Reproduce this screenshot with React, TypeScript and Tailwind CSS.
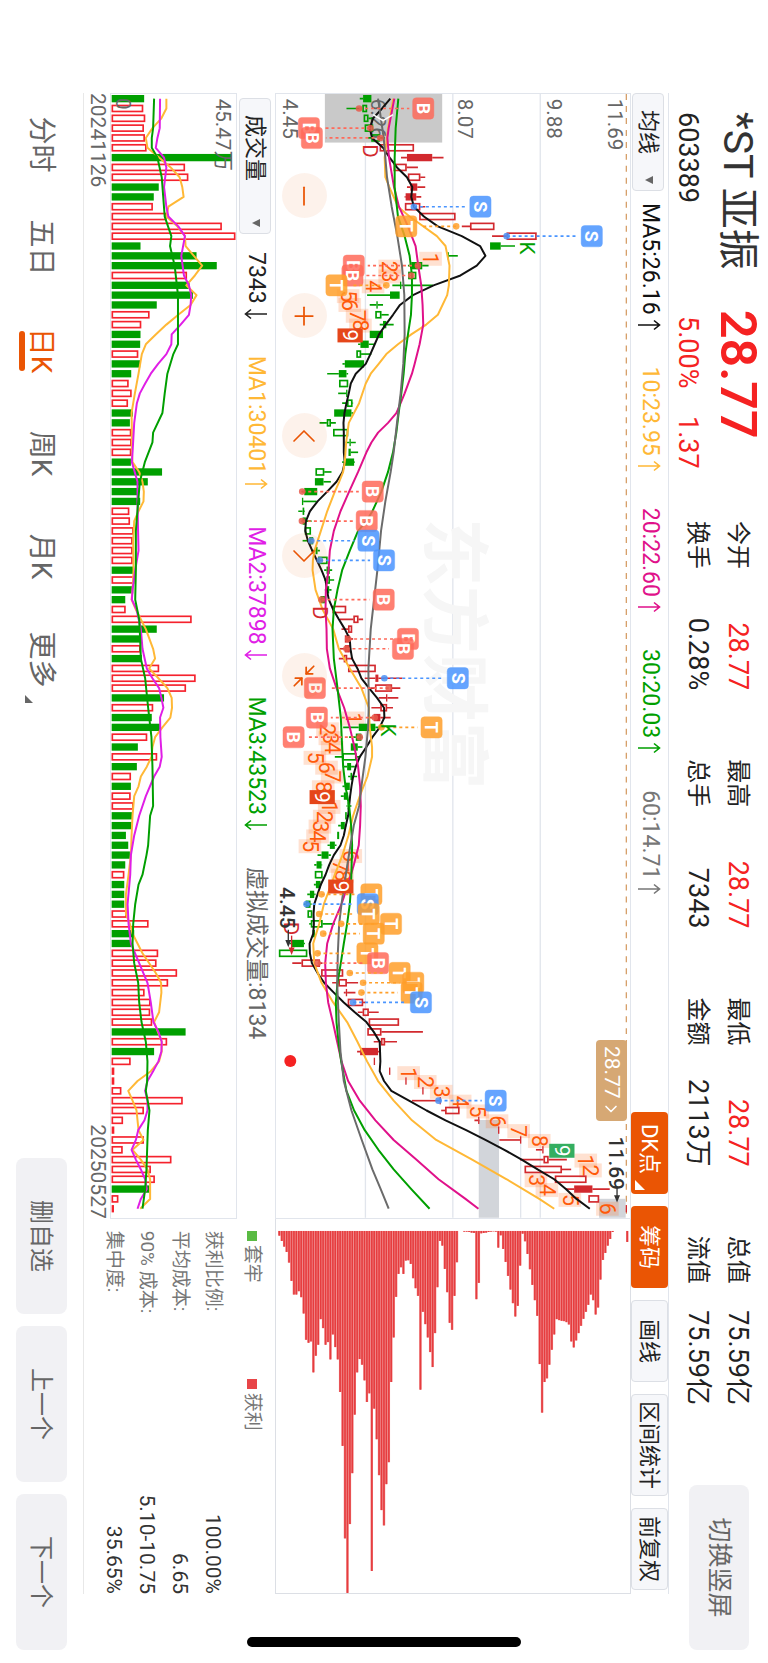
import type { ReactNode } from "react";
import { ChevronLeft, ChevronRight, Minimize2, Minus, Plus } from "lucide-react";

// Chart drawings use three units per pixel, 114 trading days per view
const STEP = 29.53;
const dayX = (i: number) => 14 + STEP * i;
const TOP = 1083;
const priceY = (level: number) => TOP - level;
const volumeY = (level: number) => 472 - level;

const UP = "#d2292e";
const DOWN = "#009f00";

type Kind = "g" | "G" | "r" | "R";
// kind (capital G / small r are hollow), body low, body high, low, high
type Candle = [Kind, number, number, number?, number?];

const candles: Candle[] = [
  ["g", 280, 305, 270, 305], ["G", 278, 292, 230, 292], ["G", 282, 296, 282, 312], ["G", 285, 310], ["G", 305, 330, 295, 345],
  ["r", 330, 433], ["R", 412, 488, 394, 522], ["r", 372, 411, 372, 445], ["r", 415, 452, 415, 467], ["R", 422, 443, 412, 467],
  ["R", 408, 440, 405, 455], ["r", 406, 452, 406, 467], ["r", 449, 558], ["r", 602, 675, 577, 675], ["r", 712, 802, 668, 802],
  ["g", 662, 694, 662, 737], ["g", 534, 538, 534, 565], ["g", 425, 458, 415, 477], ["G", 416, 440], ["g", 391, 395, 368, 490],
  ["g", 361, 390, 292, 390], ["g", 320, 324, 300, 340], ["G", 317, 335, 317, 357], ["g", 340, 350, 330, 372], ["g", 300, 340],
  ["g", 272, 297, 265, 315], ["G", 260, 274, 260, 305], ["g", 225, 283, 218, 283], ["g", 207, 230, 172, 235], ["G", 208, 235],
  ["g", 229, 233, 205, 233], ["G", 232, 248, 217, 250], ["g", 193, 245, 193, 250], ["G", 171, 183, 149, 198], ["G", 190, 235],
  ["g", 239, 243, 227, 258], ["g", 236, 243, 236, 265], ["g", 222, 253, 217, 255], ["G", 137, 163, 137, 185], ["g", 135, 161, 135, 183],
  ["g", 103, 142, 95, 142], ["g", 96, 100, 96, 140], ["g", 98, 103, 85, 105], ["g", 98, 108, 95, 125], ["G", 105, 123],
  ["g", 118, 130, 98, 130], ["g", 137, 143, 125, 150], ["G", 145, 173], ["g", 170, 180, 163, 187], ["G", 170, 180, 163, 193],
  ["g", 172, 178, 165, 185], ["g", 152, 165, 145, 165], ["r", 188, 229], ["r", 251, 266, 210, 280], ["r", 235, 247, 215, 247],
  ["R", 225, 240, 225, 250], ["R", 225, 240, 210, 240], ["r", 222, 232, 207, 250], ["r", 235, 318], ["R", 317, 326, 285, 398],
  ["r", 316, 367, 302, 392], ["R", 349, 353, 327, 386], ["r", 332, 352, 305, 370], ["R", 312, 332, 300, 363], ["g", 267, 317, 220, 330],
  ["g", 258, 275, 238, 278], ["g", 243, 264, 243, 278], ["G", 218, 260, 195, 272], ["g", 232, 244, 222, 255], ["g", 242, 247, 235, 262],
  ["g", 225, 240, 218, 240], ["g", 222, 235, 213, 235], ["g", 233, 240, 230, 245], ["g", 226, 231], ["g", 213, 225, 205, 230],
  ["g", 202, 208], ["g", 180, 195, 173, 200], ["g", 155, 176, 143, 183], ["g", 140, 155, 133, 157], ["G", 135, 158],
  ["g", 138, 152, 132, 155], ["g", 120, 133, 112, 137], ["g", 107, 122, 102, 125], ["G", 113, 127], ["G", 123, 158, 118, 195],
  ["g", 128, 135], ["g", 65, 102, 60, 105], ["G", 27, 112], ["r", 95, 150, 67, 158], ["r", 154, 220],
  ["r", 206, 231, 187, 265], ["R", 228, 232, 222, 257], ["r", 234, 280, 234, 287], ["r", 279, 297, 264, 327], ["r", 297, 388],
  ["r", 293, 335, 293, 460], ["r", 334, 346, 312, 382], ["R", 271, 325, 262, 330], ["R", 312, 316], ["R", 358, 362],
  ["R", 407, 411], ["R", 458, 462], ["R", 510, 514, 427, 514], ["r", 527, 570, 515, 570], ["R", 626, 630, 615, 629],
  ["R", 686, 690], ["R", 752, 756, 690, 756], ["R", 819, 823, 800, 823], ["r", 823, 838, 752, 893], ["r", 766, 878, 766, 906],
  ["r", 857, 952], ["R", 915, 970, 890, 1022], ["r", 958, 990], ["R", 1070, 1074],
];

type Point = [number, number];

const ma5: Point[] = [
  362, 337, 310, 300, 307, 340, 360, 382, 412, 428, 425, 433, 463, 505, 577, 632, 648, 622, 573, 492, 430, 391, 370, 348, 328, 315, 302,
  288, 258, 243, 237, 230, 224, 221, 222, 222, 222, 225, 218, 200, 172, 143, 120, 108, 106, 114, 127, 141, 155, 167, 171, 177, 190, 207,
  225, 240, 242, 247, 263, 275, 298, 322, 343, 344, 330, 308, 290, 270, 258, 250, 245, 241, 238, 235, 228, 222, 212, 192, 178, 167, 153,
  143, 133, 131, 132, 130, 119, 120, 126, 143, 163, 192, 222, 255, 290, 312, 330, 331, 332, 330, 343, 365, 418, 471, 528, 590, 648, 705,
  757, 805, 855, 890, 922, 962,
].map((v, i) => [i, v]);

const ma10: Point[] = [
  [0, 371], [3, 355], [6, 345], [8, 347], [9, 359], [11, 385], [12, 420], [14, 502], [15, 528], [17, 540], [19, 538], [20, 533],
  [22, 505], [23, 470], [24, 425], [25, 385], [26, 350], [27, 327], [28, 303], [29, 288], [31, 268], [33, 237], [35, 229], [37, 225],
  [38, 220], [39, 208], [40, 195], [42, 172], [44, 153], [46, 134], [47, 129], [48, 128], [50, 137], [52, 158], [54, 190], [56, 207],
  [58, 240], [60, 275], [62, 297], [64, 300], [66, 307], [67, 307], [69, 293], [71, 270], [73, 250], [75, 236], [77, 218], [79, 195],
  [81, 173], [82, 162], [84, 148], [86, 130], [88, 133], [90, 155], [92, 190], [94, 232], [96, 263], [98, 292], [100, 325], [102, 372],
  [104, 427], [106, 500], [108, 608], [110, 712], [112, 810], [113, 855],
];

const ma20: Point[] = [
  [0, 374], [3, 357], [4, 353], [6, 358], [9, 373], [11, 388], [13, 415], [15, 438], [17, 446], [19, 455], [21, 459], [23, 461],
  [25, 450], [27, 435], [28, 427], [30, 405], [31, 393], [32, 380], [33, 355], [34, 325], [35, 305], [36, 290], [38, 265], [40, 238],
  [42, 212], [44, 192], [46, 180], [48, 176], [50, 168], [52, 167], [54, 170], [56, 171], [58, 180], [60, 200], [62, 223], [64, 240],
  [66, 254], [68, 265], [70, 271], [72, 273], [74, 271], [76, 267], [78, 252], [80, 235], [82, 215], [84, 190], [86, 172], [88, 166],
  [90, 168], [92, 175], [94, 189], [96, 202], [98, 215], [100, 235], [102, 270], [104, 317], [106, 372], [108, 440], [110, 507],
  [112, 588], [113, 627],
];

const ma30: Point[] = [
  [0, 386], [3, 378], [6, 375], [9, 375], [12, 385], [14, 405], [16, 420], [18, 427], [20, 427], [22, 424], [24, 415], [26, 407],
  [28, 402], [30, 395], [32, 387], [34, 380], [36, 370], [38, 355], [40, 335], [42, 308], [43, 290], [44, 265], [46, 240], [48, 217],
  [50, 203], [52, 192], [54, 188], [57, 192], [60, 203], [63, 213], [66, 217], [68, 220], [70, 227], [72, 238], [74, 244], [76, 247],
  [80, 244], [82, 240], [84, 232], [86, 222], [88, 213], [90, 203], [92, 198], [94, 200], [96, 206], [98, 214], [101, 230], [103, 253],
  [105, 285], [107, 326], [109, 372], [111, 425], [113, 480],
];

const ma60: Point[] = [
  [0, 325], [4, 342], [8, 352], [11, 366], [14, 383], [17, 397], [20, 404], [24, 405], [27, 401], [30, 393], [33, 382], [36, 372],
  [38, 363], [41, 347], [44, 334], [48, 323], [51, 313], [54, 303], [58, 296], [62, 297], [64, 295], [67, 287], [70, 275], [72, 268],
  [74, 252], [76, 242], [79, 228], [82, 215], [84, 208], [87, 204], [90, 202], [94, 207], [97, 212], [100, 222], [103, 245], [106, 276],
  [109, 308], [111, 333], [113, 357],
];

// letter, day, badge level, dot level
const signals: ["B" | "S" | "T", number, number, number][] = [
  ["B", 1, 461, 268], ["B", 3, 117, 302], ["B", 4, 126, 332], ["S", 11, 633, 433], ["T", 13, 410, 560], ["S", 14, 968, 712],
  ["B", 17, 252, 445], ["B", 18, 248, 425], ["T", 19, 200, 350], ["B", 40, 309, 97], ["B", 43, 291, 96], ["S", 45, 296, 124],
  ["S", 47, 343, 150], ["B", 51, 342, 155], ["B", 55, 415, 235], ["B", 56, 400, 230], ["S", 59, 565, 344], ["B", 60, 135, 357],
  ["B", 63, 141, 315], ["T", 64, 486, 335], ["B", 65, 71, 270], ["T", 81, 305, 155], ["S", 82, 294, 110], ["T", 83, 297, 148],
  ["T", 84, 364, 214], ["T", 85, 312, 160], ["T", 87, 293, 143], ["B", 88, 325, 143], ["T", 89, 390, 240], ["T", 90, 431, 280],
  ["T", 91, 426, 275], ["S", 92, 454, 250], ["S", 102, 679, 507],
];
const signalColor = { B: "#ff6a5a", S: "#4a95ff", T: "#ff9f2a" };
const dotColor = { B: "#e8594b", S: "#4a8ff5", T: "#ffa02c" };

// nine-turn counts: digit, day, level
const counts: [string, number, number][] = [
  ["1", 16.3, 483], ["2", 17.1, 360], ["3", 18.1, 360], ["4", 19.1, 310], ["5", 20.1, 235], ["6", 21, 240], ["7", 22.1, 262],
  ["8", 23.1, 272], ["1", 63.1, 250], ["2", 64.2, 173], ["3", 65.1, 180], ["4", 66.1, 187], ["5", 67.1, 135], ["6", 68.1, 170],
  ["7", 69, 187], ["8", 70.1, 160], ["1", 72.1, 178], ["2", 73.1, 163], ["3", 74.1, 150], ["4", 75.1, 143], ["5", 76.1, 120],
  ["6", 77.1, 243], ["7", 78.1, 212], ["8", 79.1, 218], ["1", 99.2, 417], ["2", 100.1, 467], ["3", 101.1, 515], ["4", 102.1, 572],
  ["5", 103.1, 625], ["6", 104.1, 683], ["7", 105.1, 748], ["8", 106.1, 810], ["1", 108.1, 950], ["2", 109.1, 964], ["3", 110.1, 800],
  ["4", 111.1, 833], ["5", 112.1, 902], ["6", 113, 1015],
];
const nines: [number, number, string][] = [
  [24.1, 241, "#e5461a"], [71.1, 157, "#e5461a"], [80.2, 213, "#e5461a"], [107.1, 878, "#34ae60"],
];

const volumes: [Kind, number][] = [
  ["g", 195], ["r", 192], ["r", 198], ["r", 194], ["r", 197], ["r", 202], ["g", 458], ["r", 318], ["r", 328], ["g", 239], ["g", 224],
  ["r", 221], ["r", 262], ["r", 429], ["r", 470], ["g", 184], ["g", 353], ["g", 414], ["r", 324], ["g", 332], ["g", 342], ["g", 233],
  ["r", 211], ["r", 186], ["g", 184], ["g", 183], ["r", 177], ["g", 183], ["g", 156], ["r", 148], ["r", 157], ["r", 146], ["g", 161],
  ["g", 152], ["r", 156], ["r", 157], ["r", 156], ["g", 155], ["g", 249], ["g", 206], ["g", 178], ["g", 183], ["r", 150], ["r", 152],
  ["r", 163], ["r", 160], ["r", 160], ["r", 160], ["g", 163], ["r", 165], ["g", 162], ["g", 138], ["r", 139], ["r", 338], ["g", 233],
  ["g", 183], ["r", 184], ["g", 188], ["r", 240], ["r", 350], ["r", 321], ["g", 255], ["r", 222], ["g", 218], ["g", 243], ["r", 204],
  ["g", 176], ["r", 234], ["g", 173], ["r", 155], ["g", 155], ["r", 154], ["r", 163], ["g", 158], ["g", 157], ["g", 140], ["g", 147],
  ["g", 152], ["g", 138], ["r", 135], ["g", 135], ["g", 135], ["g", 135], ["r", 142], ["r", 208], ["g", 165], ["g", 155], ["r", 237],
  ["r", 232], ["r", 294], ["r", 267], ["r", 196], ["r", 214], ["r", 213], ["r", 219], ["g", 320], ["r", 264], ["g", 225], ["r", 154],
  ["R", 105], ["R", 105], ["r", 126], ["r", 311], ["r", 194], ["r", 131], ["R", 105], ["r", 194], ["r", 130], ["r", 277], ["r", 215],
  ["r", 227], ["g", 211], ["r", 117], ["R", 104],
];

const volumeMa1: Point[] = [
  [0, 262], [1, 262], [2, 247], [3, 220], [4, 200], [5, 205], [6, 240], [7, 275], [8, 302], [9, 310], [10, 314], [11, 268], [12, 262],
  [13, 295], [14, 318], [15, 320], [16, 345], [17, 370], [18, 348], [19, 322], [20, 353], [21, 335], [22, 298], [23, 262], [24, 230],
  [25, 200], [26, 188], [28, 178], [30, 167], [32, 157], [34, 158], [36, 158], [37, 160], [38, 180], [39, 190], [40, 194], [41, 193],
  [42, 178], [43, 165], [45, 162], [48, 163], [50, 160], [51, 157], [52, 170], [54, 200], [56, 222], [57, 228], [58, 210], [59, 238],
  [60, 265], [61, 278], [62, 279], [63, 274], [64, 250], [65, 228], [66, 220], [67, 217], [68, 203], [69, 185], [70, 178], [71, 165],
  [73, 160], [75, 157], [77, 155], [79, 148], [81, 140], [83, 140], [84, 152], [85, 160], [87, 190], [89, 230], [90, 246], [91, 247],
  [93, 240], [94, 225], [96, 248], [97, 248], [98, 240], [99, 215], [100, 175], [101, 147], [102, 160], [103, 172], [105, 178],
  [106, 193], [107, 160], [108, 185], [109, 205], [110, 213], [112, 213], [113, 183],
];
const volumeMa2: Point[] = [
  [0, 243], [3, 242], [4, 235], [5, 230], [6, 255], [7, 262], [9, 255], [11, 262], [12, 268], [13, 298], [14, 318], [16, 307], [18, 315],
  [19, 330], [20, 337], [21, 335], [22, 330], [23, 305], [24, 278], [25, 277], [26, 262], [27, 237], [28, 215], [29, 198], [30, 182],
  [31, 173], [33, 165], [36, 160], [37, 158], [39, 175], [41, 175], [43, 176], [46, 178], [48, 168], [50, 160], [51, 158], [52, 172],
  [54, 185], [56, 190], [58, 203], [59, 220], [60, 240], [61, 247], [62, 253], [63, 243], [65, 244], [67, 248], [68, 242], [69, 225],
  [71, 200], [73, 180], [75, 165], [77, 155], [79, 153], [82, 145], [84, 148], [86, 155], [88, 180], [90, 205], [92, 215], [94, 223],
  [95, 238], [96, 248], [97, 247], [98, 238], [99, 222], [100, 205], [101, 198], [102, 205], [103, 205], [104, 196], [105, 177],
  [106, 170], [107, 157], [108, 170], [109, 185], [110, 198], [111, 203], [112, 185], [113, 175],
];
const volumeMa3: Point[] = [
  [0, 225], [3, 222], [4, 218], [5, 218], [6, 235], [8, 248], [12, 257], [14, 277], [15, 273], [17, 287], [20, 297], [25, 297],
  [26, 283], [28, 265], [30, 257], [32, 250], [34, 222], [35, 220], [37, 197], [39, 182], [41, 177], [44, 170], [48, 170], [51, 168],
  [53, 180], [55, 183], [57, 185], [59, 198], [62, 207], [65, 217], [68, 220], [72, 222], [73, 213], [76, 207], [77, 202], [79, 190],
  [80, 178], [82, 168], [84, 162], [86, 160], [88, 165], [90, 177], [92, 180], [94, 187], [96, 200], [98, 205], [100, 204], [101, 200],
  [103, 211], [105, 206], [107, 204], [109, 202], [111, 198], [113, 190],
];

// Chip distribution, lowest price first
const chips = [
  137, 153, 170, 186, 218, 273, 314, 314, 304, 322, 371, 450, 459, 455, 548, 498, 465, 388, 415, 465, 457, 509, 434, 472, 509, 607, 769,
  1047, 1211, 1004, 851, 675, 548, 508, 525, 572, 637, 611, 1145, 657, 749, 857, 962, 1008, 884, 818, 577, 443, 321, 252, 232, 252, 212,
  211, 222, 265, 295, 318, 600, 366, 403, 443, 487, 532, 430, 292, 153, 167, 237, 307, 399, 420, 318, 217, 0, 0, 125, 125, 126, 128, 129,
  328, 279, 130, 129, 128, 126, 125, 124, 125, 173, 136, 177, 216, 258, 299, 340, 380, 348, 227, 131, 154, 192, 238, 285, 331, 378, 523,
  669, 577, 566, 525, 480, 434, 388, 391, 393, 394, 397, 404, 455, 473, 452, 430, 408, 387, 366, 345, 314, 331, 374, 353, 269, 210, 189,
  167, 147, 126, 0, 0, 0, 0, 0, 156,
];

const quotes = [
  [["今开", "28.77", "text-[#f52222]"], ["换手", "0.28%", "text-[#222222]"]],
  [["最高", "28.77", "text-[#f52222]"], ["总手", "7343", "text-[#222222]"]],
  [["最低", "28.77", "text-[#f52222]"], ["金额", "2113万", "text-[#222222]"]],
  [["总值", "75.59亿", "text-[#222222]"], ["流值", "75.59亿", "text-[#222222]"]],
];

const costs = [
  ["获利比例:", "100.00%"],
  ["平均成本:", "6.65"],
  ["90% 成本:", "5.10-10.75"],
  ["集中度:", "35.65%"],
];

function linePath(points: Point[], toY: (level: number) => number) {
  return points.map(([i, v], n) => `${n ? "L" : "M"}${dayX(i).toFixed(1)} ${toY(v)}`).join("");
}

function Arrow({ down = false }: { down?: boolean }) {
  return (
    <svg
      viewBox="0 0 12 24"
      className={down ? "h-6 w-3 rotate-180" : "h-6 w-3"}
      fill="none"
      stroke="currentColor"
      strokeWidth="1.6"
      aria-hidden="true"
    >
      <path d="M6 23V2M1.500 7 6 1.500 10.500 7" />
    </svg>
  );
}

function Indicator({ color, down, children }: { color: string; down?: boolean; children: ReactNode }) {
  return (
    <span className={`flex items-center gap-1 whitespace-nowrap ${color}`}>
      {children}
      <Arrow down={down} />
    </span>
  );
}

function Picker({ label, option, width }: { label: string; option: string; width: string }) {
  return (
    <div className={`relative h-8 shrink-0 ${width}`}>
      <select
        aria-label={label}
        className="h-full w-full appearance-none rounded-[4px] border border-[#dcdfe5] bg-[#f6f7fa] pl-4 text-[22px] leading-7 text-[#222222]"
      >
        <option>{option}</option>
      </select>
      <svg viewBox="0 0 10 8" className="pointer-events-none absolute right-1.5 top-3 h-2 w-2.5" aria-hidden="true">
        <path d="M1 0h8L5 8z" fill="#666" />
      </svg>
    </div>
  );
}

function CandleStick({ candle, index }: { candle: Candle; index: number }) {
  const [kind, bodyLow, bodyHigh, low = bodyLow, high = bodyHigh] = candle;
  const x = dayX(index);
  const color = kind === "g" || kind === "G" ? DOWN : UP;
  const hollow = kind === "G" || kind === "r";
  const inset = hollow ? 2 : 0;
  return (
    <g stroke={color} strokeWidth={hollow ? 5 : 0}>
      <path d={`M${x} ${priceY(high)}V${priceY(bodyHigh)}M${x} ${priceY(bodyLow)}V${priceY(low)}`} strokeWidth="5" />
      <rect
        x={x - 11 + inset}
        y={priceY(bodyHigh) + inset}
        width={22 - inset * 2}
        height={Math.max(bodyHigh - bodyLow - inset * 2, 2)}
        fill={hollow ? "none" : color}
      />
    </g>
  );
}

function Signal({ signal }: { signal: (typeof signals)[number] }) {
  const [letter, day, level, dot] = signal;
  const x = dayX(day);
  const edge = level > dot ? level - 42 : level + 42;
  return (
    <g>
      <path d={`M${x} ${priceY(dot)}V${priceY(edge)}`} stroke={signalColor[letter]} strokeWidth="5" strokeDasharray="9 9" />
      <circle cx={x} cy={priceY(dot)} r="10" fill={dotColor[letter]} opacity="0.85" />
      <rect
        x={x - 32}
        y={priceY(level) - 32}
        width="64"
        height="64"
        rx="11"
        fill={signalColor[letter]}
        stroke={signalColor[letter]}
        strokeOpacity="0.4"
        strokeWidth="3"
        opacity="0.85"
      />
      <text x={x} y={priceY(level) + 19} textAnchor="middle" fontSize="54" fontWeight="700" fill="#fff">
        {letter}
      </text>
    </g>
  );
}

function PriceChart() {
  return (
    <svg
      viewBox="0 0 3378 1065"
      preserveAspectRatio="none"
      className="absolute inset-0 h-full w-full"
      role="img"
      aria-label="日K线"
    >
      <g stroke="#e1e5ec" strokeWidth="4">
        <path d={`M0 ${priceY(813)}H3378M0 ${priceY(550)}H3378M0 ${priceY(287)}H3378`} />
        <path d={`M3130 ${priceY(754)}H3378`} />
      </g>
      <text x="1275" y={priceY(480)} fontSize="204" fontWeight="700" fill="#f6f6f6">
        东方财富
      </text>
      <path d={`M0 ${priceY(1072)}H3378`} stroke="#d6a06a" strokeWidth="4" strokeDasharray="18 18" />
      <rect x="0" y={priceY(518)} width="146" height="353" fill="#c9c9c9" />
      <rect x="3084" y={priceY(689)} width="294" height="61" fill="#d2d5da" />
      <rect x="3321" y={priceY(1070)} width="57" height="80" fill="#d2d5da" />

      <g fontSize="62" fill="#666">
        <text x="14" y={priceY(1016)}>11.69</text>
        <text x="14" y={priceY(834)}>9.88</text>
        <text x="14" y={priceY(567)}>8.07</text>
        <text x="14" y={priceY(303)}>6.26</text>
        <text x="14" y={priceY(39)}>4.45</text>
      </g>

      {counts.map(([digit, day, level]) => (
        <g key={`${digit}-${day}`}>
          <rect x={dayX(day) - 21} y={priceY(level) - 34} width="42" height="68" fill="#ff6a1a" opacity="0.2" />
          <text x={dayX(day)} y={priceY(level) + 22} textAnchor="middle" fontSize="64" fill="#ff5a0a">
            {digit}
          </text>
        </g>
      ))}

      {candles.map((candle, i) => (
        <CandleStick key={i} candle={candle} index={i} />
      ))}

      <g fill="none" strokeWidth="6" strokeLinejoin="round">
        <path d={linePath(ma5, priceY)} stroke="#111" />
        <path d={linePath(ma10, priceY)} stroke="#ffb836" />
        <path d={linePath(ma20, priceY)} stroke="#e0118a" />
        <path d={linePath(ma30, priceY)} stroke={DOWN} />
        <path d={linePath(ma60, priceY)} stroke="#6b6b6b" />
      </g>

      <path d={`M62 ${priceY(370)}L80 ${priceY(340)}L62 ${priceY(310)}`} fill="none" stroke="#fff" strokeWidth="5" />

      {signals.map((signal) => (
        <Signal key={`${signal[0]}-${signal[1]}`} signal={signal} />
      ))}

      {nines.map(([day, level, color]) => (
        <g key={day}>
          <rect x={dayX(day) - 21} y={priceY(level) - 38} width="42" height="76" fill={color} />
          <text x={dayX(day)} y={priceY(level) + 22} textAnchor="middle" fontSize="62" fill="#fff">
            9
          </text>
        </g>
      ))}

      <g fontSize="62" textAnchor="middle">
        <text x={dayX(15) + 6} y={priceY(753)} fill={DOWN}>K</text>
        <text x={dayX(64) + 8} y={priceY(335)} fill={DOWN}>K</text>
        <text x={dayX(5) + 10} y={priceY(279)} fill={UP}>D</text>
        <text x={dayX(52) + 10} y={priceY(129)} fill={UP}>D</text>
        <text x={dayX(84) + 14} y={priceY(42)} fill={UP}>D</text>
      </g>

      <g fontSize="63" fontWeight="500" fill="#333">
        <text x="2384" y={priceY(31)}>4.45</text>
        <text x="3134" y={priceY(1021)}>11.69</text>
      </g>
      <path d={`M2512 ${priceY(55)}H2548M3284 ${priceY(1044)}H3316`} stroke="#333" strokeWidth="4" />
      <path d={`M2543 ${priceY(64)}l22 9l-22 9zM3310 ${priceY(1053)}l22 9l-22 9z`} fill="#333" />
      <path d={`M2530 ${priceY(65)}H2575`} stroke={UP} strokeWidth="4" />
      <path d={`M2566 ${priceY(74)}l22 9l-22 9z`} fill={UP} />
      <circle cx="2907" cy={priceY(61)} r="18" fill="#f52222" />
    </svg>
  );
}

function VolumeChart() {
  return (
    <svg viewBox="0 0 3378 377" preserveAspectRatio="none" className="h-full w-full" role="img" aria-label="成交量">
      {volumes.map(([kind, level], i) => {
        const hollow = kind === "r";
        const inset = hollow ? 2 : 0;
        return (
          <rect
            key={i}
            x={dayX(i) - 11 + inset}
            y={volumeY(level) + inset}
            width={22 - inset * 2}
            height={level - 97 - inset * 2}
            fill={hollow ? "none" : kind === "g" ? DOWN : "#f5222d"}
            stroke={hollow ? "#f5222d" : "none"}
            strokeWidth="5"
          />
        );
      })}
      <g fontSize="62" fill="#666">
        <text x="14" y={volumeY(411)}>45.47万</text>
        <text x="12" y={volumeY(110)}>0</text>
      </g>
      <g fill="none" strokeWidth="6" strokeLinejoin="round">
        <path d={linePath(volumeMa1, volumeY)} stroke="#ffb836" />
        <path d={linePath(volumeMa2, volumeY)} stroke="#e01ee6" />
        <path d={linePath(volumeMa3, volumeY)} stroke={DOWN} />
      </g>
    </svg>
  );
}

function ChipChart() {
  return (
    <svg viewBox="0 0 1125 1065" preserveAspectRatio="none" className="h-full w-full" role="img" aria-label="筹码分布">
      {chips.map((end, k) =>
        end ? (
          <g key={k} fill="#e63c3e">
            <rect x="36" y={1055 - 7.32 * k - 3.66} width={end - 123} height="7.32" opacity="0.7" />
            <rect x="36" y={1055 - 7.32 * k - 2.2} width={end - 123} height="4.4" />
          </g>
        ) : null,
      )}
    </svg>
  );
}

const roundButton = "flex size-[45px] items-center justify-center rounded-full bg-[#ea5504]/8 text-[#ea5504]";
const toolButton =
  "h-full rounded-[4px] border border-[#dcdfe5] bg-[#f6f7fa] text-[22px] whitespace-nowrap text-[#222222]";
const activeTool = "relative h-full rounded-[4px] bg-[#ea5504] text-[22px] whitespace-nowrap text-white";
const bottomButton = "h-[51px] w-[156px] rounded-lg bg-[#f1f1f4] text-2xl text-[#666666]";
const tabButton = "relative h-10 w-[103px] text-[28px] leading-10 whitespace-nowrap text-[#666666]";

export default function App() {
  return (
    <div className="h-screen w-screen overflow-hidden bg-white">
      {/* Landscape page, turned a quarter clockwise */}
      <main className="relative ml-[100vw] flex h-[100vw] w-[100vh] origin-top-left rotate-90 flex-col bg-white font-['Roboto','Noto_Sans_CJK_SC',sans-serif] text-[#222222]">
        <header className="flex h-[99px] shrink-0 items-start pl-28 pr-[13px]">
          <div className="w-[409px] shrink-0">
            <div className="flex h-[60px] items-center">
              <h1 className="w-[198px] text-[41px] leading-[60px] whitespace-nowrap text-[#333333]">*ST 亚振</h1>
              <span className="text-[50px] leading-[60px] font-semibold text-[#f52222]">28.77</span>
            </div>
            <div className="flex h-10 items-center text-[27px] leading-10">
              <span className="w-[204px]">603389</span>
              <span className="w-[100px] text-[#f52222]">5.00%</span>
              <span className="text-[#f52222]">1.37</span>
            </div>
          </div>
          <div className="grid w-[884px] grid-cols-4 gap-[69px] pt-[10px]">
            {quotes.map((column) => (
              <dl key={column[0][0]}>
                {column.map(([label, value, color]) => (
                  <div key={label} className="flex h-10 items-center justify-between whitespace-nowrap">
                    <dt className="text-2xl">{label}</dt>
                    <dd className={`text-[27px] ${color}`}>{value}</dd>
                  </div>
                ))}
              </dl>
            ))}
          </div>
          <button type="button" className="mt-[19px] ml-auto h-[60px] w-[165px] rounded-lg bg-[#f1f1f4] text-[25px] text-[#666666]">
            切换竖屏
          </button>
        </header>

        <section className="mr-[69px] ml-[93px] flex min-h-0 flex-1 flex-col border-b border-[#e8e8e8]">
          <div className="flex h-[38px] shrink-0 items-center border-t border-[#e1e5ec] text-[23px]">
            <Picker label="主图指标" option="均线" width="w-[98px]" />
            <div className="ml-3 flex items-center gap-9">
              <Indicator color="text-[#111111]">MA5:26.16</Indicator>
              <Indicator color="text-[#ffb836]">10:23.95</Indicator>
              <Indicator color="text-[#e0118a]">20:22.60</Indicator>
              <Indicator color="text-[#009f00]">30:20.03</Indicator>
              <Indicator color="text-[#777777]">60:14.71</Indicator>
            </div>
            <div className="ml-auto flex h-full gap-3 pr-1">
              <button type="button" className={`${activeTool} w-[82px] pr-2`}>
                DK点
                <svg viewBox="0 0 10 10" className="absolute right-1 bottom-1 size-2.5" aria-hidden="true">
                  <path d="M10 0v10H0z" fill="#fff" />
                </svg>
              </button>
              <button type="button" className={`${activeTool} w-[82px]`}>筹码</button>
              <button type="button" className={`${toolButton} w-[82px]`}>画线</button>
              <button type="button" className={`${toolButton} w-[102px]`}>区间统计</button>
              <button type="button" className={`${toolButton} w-[82px]`}>前复权</button>
            </div>
          </div>

          <div className="flex min-h-0 flex-1">
            <div className="relative w-3/4 border border-[#e1e5ec]">
              <PriceChart />
              <button
                type="button"
                className="absolute top-[3px] right-[97px] flex h-[31px] w-[81px] items-center justify-center rounded-[4px] bg-[#d6a874] text-[21px] text-white"
              >
                28.77
                <ChevronRight size={20} className="-mr-1" />
              </button>
              <div className="absolute bottom-[6px] left-[79px] flex gap-[75px]">
                <button type="button" aria-label="缩小" className={roundButton}>
                  <Minus size={30} strokeWidth={1.4} />
                </button>
                <button type="button" aria-label="放大" className={roundButton}>
                  <Plus size={30} strokeWidth={1.4} />
                </button>
                <button type="button" aria-label="左移" className={roundButton}>
                  <ChevronLeft size={40} strokeWidth={1} />
                </button>
                <button type="button" aria-label="右移" className={roundButton}>
                  <ChevronRight size={40} strokeWidth={1} />
                </button>
                <button type="button" aria-label="收起" className={roundButton}>
                  <Minimize2 size={26} strokeWidth={1.6} className="rotate-90" />
                </button>
              </div>
            </div>
            <div className="w-1/4 border border-l-0 border-[#dcdfe5]">
              <ChipChart />
            </div>
          </div>

          <div className="flex h-[191px] shrink-0">
            <div className="w-3/4">
              <div className="flex h-[38px] items-center pl-[5px] text-[23px]">
                <Picker label="副图指标" option="成交量" width="w-[136px]" />
                <div className="ml-[18px] flex items-center gap-9 whitespace-nowrap">
                  <Indicator color="text-[#222222]" down>7343</Indicator>
                  <Indicator color="text-[#ffb836]">MA1:30401</Indicator>
                  <Indicator color="text-[#e01ee6]" down>MA2:37898</Indicator>
                  <Indicator color="text-[#009f00]" down>MA3:43523</Indicator>
                  <span className="text-[#666666]">虚拟成交量:8134</span>
                </div>
              </div>
              <div className="h-[127px] border border-[#e1e5ec]">
                <VolumeChart />
              </div>
              <div className="flex h-6 items-center justify-between text-[21px] leading-6 text-[#666666]">
                <time>20241126</time>
                <time>20250527</time>
              </div>
            </div>

            <div className="w-1/4 pl-3">
              <div className="flex h-[46px] items-center text-[19px] text-[#777777]">
                <span className="flex w-[148px] items-center gap-1">
                  <i className="size-2.5 bg-[#5abb44]" />
                  套牢
                </span>
                <span className="flex items-center gap-1">
                  <i className="size-2.5 bg-[#e84548]" />
                  获利
                </span>
              </div>
              <dl>
                {costs.map(([label, value]) => (
                  <div key={label} className="flex h-[33px] items-center justify-between whitespace-nowrap">
                    <dt className="text-[19px] text-[#777777]">{label}</dt>
                    <dd className="text-[21px] text-[#333333]">{value}</dd>
                  </div>
                ))}
              </dl>
            </div>
          </div>
        </section>

        <footer className="flex h-[83px] shrink-0 items-center justify-between pr-[13px] pl-[93px]">
          <nav className="flex">
            <button type="button" className={tabButton}>分时</button>
            <button type="button" className={tabButton}>五日</button>
            <button type="button" aria-current="page" className="relative h-10 w-[103px] text-[28px] leading-10 whitespace-nowrap text-[#ea5504]">
              日K
              <span className="absolute -bottom-0.5 left-8 h-1.5 w-10 rounded-full bg-[#ea5504]" />
            </button>
            <button type="button" className={tabButton}>周K</button>
            <button type="button" className={tabButton}>月K</button>
            <button type="button" className={tabButton}>
              更多
              <svg viewBox="0 0 8 8" className="absolute right-2 bottom-1 size-2" aria-hidden="true">
                <path d="M8 0v8H0z" fill="#666" />
              </svg>
            </button>
          </nav>
          <div className="flex gap-3">
            <button type="button" className={bottomButton}>删自选</button>
            <button type="button" className={bottomButton}>上一个</button>
            <button type="button" className={bottomButton}>下一个</button>
          </div>
        </footer>

        <div className="absolute top-[247px] right-4 h-[274px] w-2.5 rounded-full bg-black" />
      </main>
    </div>
  );
}
